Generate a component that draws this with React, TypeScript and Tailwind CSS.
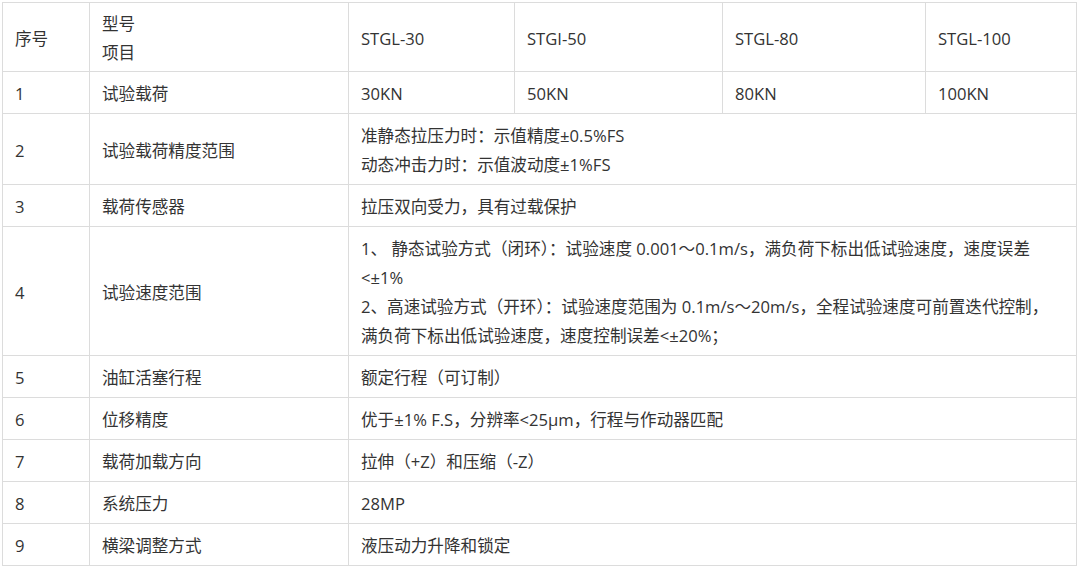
const rows: { no: string; item: string; values: string[] | string[][] }[] = [
  { no: "1", item: "试验载荷", values: ["30KN", "50KN", "80KN", "100KN"] },
  {
    no: "2",
    item: "试验载荷精度范围",
    values: [["准静态拉压力时：示值精度±0.5%FS", "动态冲击力时：示值波动度±1%FS"]],
  },
  { no: "3", item: "载荷传感器", values: [["拉压双向受力，具有过载保护"]] },
  {
    no: "4",
    item: "试验速度范围",
    values: [
      [
        "1、 静态试验方式（闭环）：试验速度 0.001～0.1m/s，满负荷下标出低试验速度，速度误差",
        "<±1%",
        "2、高速试验方式（开环）：试验速度范围为 0.1m/s～20m/s，全程试验速度可前置迭代控制，",
        "满负荷下标出低试验速度，速度控制误差<±20%；",
      ],
    ],
  },
  { no: "5", item: "油缸活塞行程", values: [["额定行程（可订制）"]] },
  { no: "6", item: "位移精度", values: [["优于±1% F.S，分辨率<25μm，行程与作动器匹配"]] },
  { no: "7", item: "载荷加载方向", values: [["拉伸（+Z）和压缩（-Z）"]] },
  { no: "8", item: "系统压力", values: [["28MP"]] },
  { no: "9", item: "横梁调整方式", values: [["液压动力升降和锁定"]] },
];

const models = ["STGL-30", "STGI-50", "STGL-80", "STGL-100"];

const cell = "border border-[#dcdcdc] px-3 pt-[7px] pb-[5px] align-middle text-left font-normal whitespace-nowrap";
const head = "border border-[#dcdcdc] px-3 pt-[6px] pb-[4px] align-middle text-left font-normal";

export default function App() {
  return (
    <div
      className="bg-white w-[1086px] h-[570px] pt-[2px] pl-[2px] text-[16.6px] leading-[29px] text-[#333]"
      style={{ fontFamily: '"Open Sans", "Noto Sans CJK SC", sans-serif' }}
    >
      <table className="table-fixed border-collapse w-[1074px]">
        <colgroup>
          <col className="w-[87px]" />
          <col className="w-[259px]" />
          <col className="w-[166px]" />
          <col className="w-[208px]" />
          <col className="w-[203px]" />
          <col className="w-[151px]" />
        </colgroup>
        <thead>
          <tr>
            <th className={head}>序号</th>
            <th className={head}>
              <div>型号</div>
              <div>项目</div>
            </th>
            {models.map((m) => (
              <th key={m} className={head}>
                {m}
              </th>
            ))}
          </tr>
        </thead>
        <tbody>
          {rows.map((r) => (
            <tr key={r.no}>
              <td className={cell}>{r.no}</td>
              <td className={cell}>{r.item}</td>
              {r.values.length === 4 ? (
                (r.values as string[]).map((v) => (
                  <td key={v} className={cell}>
                    {v}
                  </td>
                ))
              ) : (
                <td colSpan={4} className={cell}>
                  {(r.values[0] as string[]).map((line) => (
                    <div key={line}>{line}</div>
                  ))}
                </td>
              )}
            </tr>
          ))}
        </tbody>
      </table>
    </div>
  );
}
